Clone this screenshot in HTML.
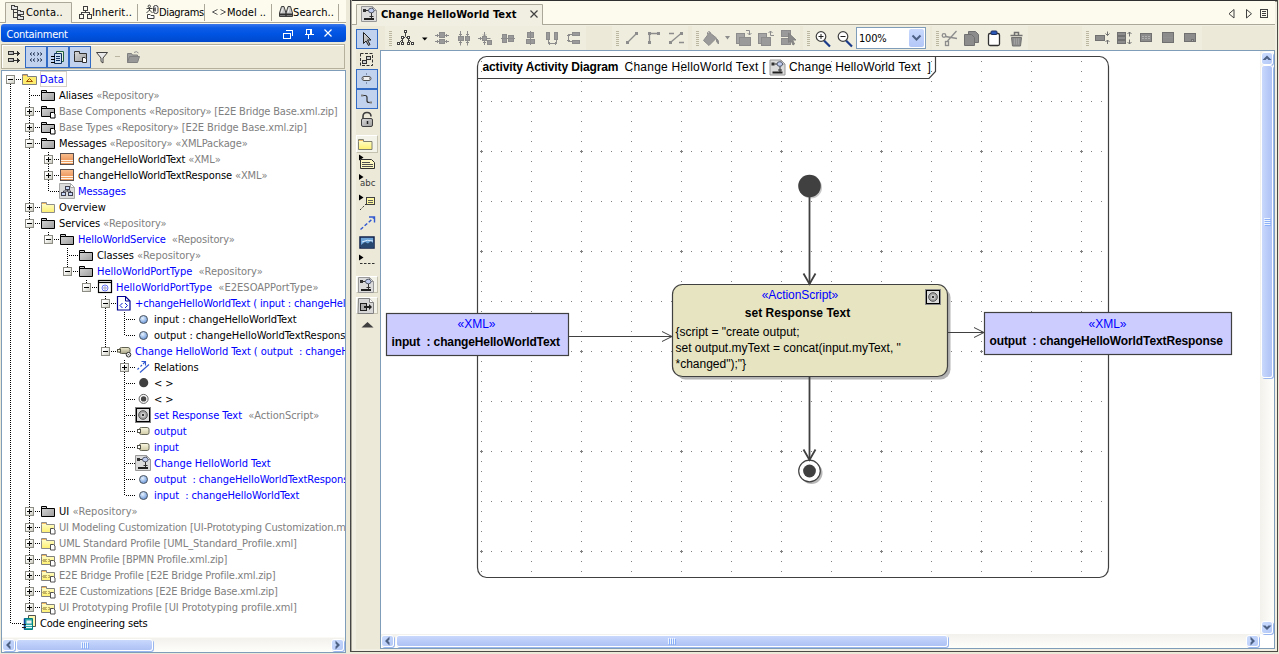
<!DOCTYPE html>
<html><head><meta charset="utf-8"><title>Change HelloWorld Text</title><style>
html,body{margin:0;padding:0}
body{width:1279px;height:654px;overflow:hidden;background:#ECE9D8;position:relative;font-family:"DejaVu Sans Condensed","Liberation Sans",sans-serif;font-size:11px;color:#000}
.a{position:absolute}
.t{position:absolute;white-space:pre;line-height:16px;height:16px;font-size:11px;letter-spacing:-0.22px;margin-top:1px}
.g{color:#808080}
.b{color:#0000FF}
svg{position:absolute;overflow:visible}
.dg{font-family:"Liberation Sans",Arial,sans-serif}
</style></head><body>
<svg class="a" width="0" height="0" style="left:0;top:0"><defs><linearGradient id="gg" x1="0" y1="0" x2="1" y2="1"><stop offset="0" stop-color="#DADADA"/><stop offset="1" stop-color="#9C9C9C"/></linearGradient><linearGradient id="og" x1="0" y1="0" x2="0" y2="1"><stop offset="0" stop-color="#F8C090"/><stop offset="1" stop-color="#E88040"/></linearGradient><linearGradient id="yg" x1="0" y1="0" x2="0" y2="1"><stop offset="0" stop-color="#F0ECD0"/><stop offset="1" stop-color="#A8A488"/></linearGradient><linearGradient id="eg" x1="0" y1="0" x2="1" y2="1"><stop offset="0.300" stop-color="#FFFFFF"/><stop offset="1" stop-color="#C8C8BC"/></linearGradient><linearGradient id="yg2" x1="0" y1="0" x2="0" y2="1"><stop offset="0" stop-color="#FAF8E0"/><stop offset="1" stop-color="#D0CCA8"/></linearGradient><linearGradient id="fg" x1="0" y1="0" x2="0" y2="1"><stop offset="0.200" stop-color="#FFFCC0"/><stop offset="1" stop-color="#FFF070"/></linearGradient><radialGradient id="bg" cx="0.4" cy="0.35" r="0.7"><stop offset="0" stop-color="#E8F4FF"/><stop offset="1" stop-color="#6090D8"/></radialGradient><symbol id="i-pkg" overflow="visible"><path d="M0.5 3.5h5v2h8v8h-13z" fill="url(#gg)" stroke="#000"/><path d="M0.5 5.5h5" stroke="#000"/></symbol><symbol id="i-pkgs" overflow="visible"><path d="M0.5 3.5h5v2h8v8h-13z" fill="url(#gg)" stroke="#000"/><path d="M0.5 5.5h5" stroke="#000"/><path d="M9.5 9.5h3l1.5 1.5v4h-4.5z" fill="#fff" stroke="#000"/></symbol><symbol id="i-fold" overflow="visible"><path d="M0.500 5.500v-2h5v2h8v8h-13z" fill="url(#fg)" stroke="#8C8C8C"/><path d="M1 4.500h4" stroke="#F4B860"/></symbol><symbol id="i-folds" overflow="visible"><path d="M0.500 5.500v-2h5v2h8v8h-13z" fill="url(#fg)" stroke="#8C8C8C"/><path d="M1 4.500h4" stroke="#F4B860"/><path d="M9.5 9.5h3l1.5 1.5v4h-4.5z" fill="#fff" stroke="#505050"/></symbol><symbol id="i-data" overflow="visible"><path d="M0.5 5.5v-2h5v2h9v8h-14z" fill="#FFEE70" stroke="#808080"/><path d="M1 4.5h4" stroke="#F0B050"/><path d="M4.5 10.5l3-3l3 3z" fill="none" stroke="#A05000"/></symbol><symbol id="i-cls" overflow="visible"><rect x="0.5" y="2.5" width="13" height="11" fill="url(#og)" stroke="#585050"/><path d="M1 9.500h12M1 11.500h12" stroke="#FFF4E8"/><path d="M1 10.500h12M1 12.500h12" stroke="#F0A060"/></symbol><symbol id="i-cdiag" overflow="visible"><path d="M-0.500 0.500h11l4 4v11h-15z" fill="#DCDCDC" stroke="#A8A8A8"/><path d="M10.500 0.500v4h4z" fill="#fff" stroke="#A8A8A8"/><g fill="#C8D8F8" stroke="#404050"><rect x="5.500" y="3.500" width="4" height="3"/><rect x="1.500" y="9.500" width="4" height="3"/><rect x="8.500" y="9.500" width="4" height="3"/></g><path d="M7.500 7v1.500M3.500 9.500v-1.500h7v1.500" fill="none" stroke="#404050"/></symbol><symbol id="i-port" overflow="visible"><rect x="0.500" y="1.500" width="13" height="12" fill="#fff" stroke="#000" stroke-width="1.200"/><path d="M0.500 3.500h13" stroke="#000" stroke-width="1.200"/><circle cx="7" cy="9" r="3" fill="none" stroke="#4050F0" stroke-width="0.800"/><path d="M5.500 9l1.500-1.500l1.500 1.500l-1.500 1.500z" fill="#F8E8A0" stroke="#4050F0" stroke-width="0.600"/></symbol><symbol id="i-oper" overflow="visible"><path d="M0.500 1.500h8l4.500 4.500v9h-12.500z" fill="#fff" stroke="#000090" stroke-width="1.200"/><path d="M8.500 2v4h4" fill="none" stroke="#000090" stroke-width="1"/><path d="M5.500 8l-2.500 2.500l2.500 2.500M8 8l2.500 2.500l-2.500 2.500" fill="none" stroke="#1020D0" stroke-width="1"/></symbol><symbol id="i-circ" overflow="visible"><circle cx="7.500" cy="8.500" r="4" fill="url(#bg)" stroke="#505860"/></symbol><symbol id="i-act" overflow="visible"><rect x="2.500" y="4.500" width="10.500" height="6" rx="2" fill="url(#yg)" stroke="#606050"/><rect x="0.500" y="6.500" width="3" height="2.500" fill="#F4F0D8" stroke="#505040"/><circle cx="11.500" cy="11.700" r="2.300" fill="#fff" stroke="#303030"/><path d="M10.500 10.700l2 2M12.500 10.700l-2 2" stroke="#505050" stroke-width="0.700"/></symbol><symbol id="i-rel" overflow="visible"><path d="M1.500 10.500l1.500-1.500M4.500 7.500l1.500-1.500M7 5l2.500-2.500" stroke="#3058D0" stroke-width="1.100"/><path d="M5.500 2.500h4v4" fill="none" stroke="#3058D0" stroke-width="1.100"/><path d="M4 13.500l9-8" stroke="#3058D0" stroke-width="1.100"/></symbol><symbol id="i-init" overflow="visible"><circle cx="7.700" cy="7.700" r="4.600" fill="#404040"/></symbol><symbol id="i-final" overflow="visible"><circle cx="7.600" cy="7.900" r="4.500" fill="#fff" stroke="#606060"/><circle cx="7.600" cy="7.900" r="2.700" fill="#484848"/></symbol><symbol id="i-action" overflow="visible"><rect x="-0.500" y="0.500" width="15" height="15" fill="#DCDCDC" stroke="#808080"/><rect x="0.500" y="1.500" width="13" height="13" fill="#DCDCDC" stroke="#000"/><circle cx="7" cy="8" r="4.300" fill="#A8A8A8" stroke="#505050"/><circle cx="7" cy="8" r="2.200" fill="#D0D0D0"/><circle cx="7" cy="8" r="1" fill="#000"/></symbol><symbol id="i-pin" overflow="visible"><rect x="3.500" y="4.500" width="9.500" height="7" rx="1.800" fill="url(#yg2)" stroke="#686858"/><rect x="1.500" y="6.500" width="3" height="3" fill="#fff" stroke="#505048"/></symbol><symbol id="i-adiag" overflow="visible"><path d="M0.500 0.500h11l4 4v11h-15z" fill="#DCDCDC" stroke="#989898"/><path d="M11.500 0.500v4h4z" fill="#fff" stroke="#989898"/><rect x="2" y="3" width="3" height="3" fill="#303030"/><path d="M5 4.500h3" stroke="#303030"/><ellipse cx="10.300" cy="4.500" rx="2.800" ry="2.300" fill="#C0CCF0" stroke="#505868"/><path d="M10.500 7v5.500M8.500 10.500h4" stroke="#303030"/><rect x="3" y="12" width="10" height="2" fill="#202020"/></symbol><symbol id="i-prof" overflow="visible"><path d="M0.500 5.500v-2h5v2h8v8h-13z" fill="url(#fg)" stroke="#808080"/><path d="M1 4.500h4" stroke="#F4B860"/><path d="M3.500 8l-1.500 1.500l1.500 1.500M5.500 8l-1.500 1.500l1.500 1.500M7.500 8l1.500 1.500l-1.500 1.500" fill="none" stroke="#705820" stroke-width="0.900"/><path d="M9.500 9.500h3l1.500 1.500v4h-4.500z" fill="#fff" stroke="#505050"/></symbol><symbol id="i-code" overflow="visible"><path d="M6.500 1.500h7v11h-7z" fill="#FFF8B0" stroke="#505050"/><path d="M2.500 4.500h8v11h-8z" fill="#30A8A8" stroke="#008080"/><path d="M2.500 4.500v11" stroke="#1040A0" stroke-width="1.500"/><path d="M4.500 6.500h5v3h-5z" fill="#F0F0F0"/><path d="M4 11.500h6M4 13.500h6" stroke="#E8F8F8"/><path d="M0 10.500h4M0 13.500h4" stroke="#202020"/></symbol></defs></svg>
<div class="a" style="left:0px;top:0px;width:346px;height:24px;background:#FDFBEE"></div>
<div class="a" style="left:0px;top:22px;width:346px;height:1px;background:#ACA899"></div>
<svg class="a" style="left:0;top:0" width="346" height="24"><path d="M5.500 22.500V2.500H71.500V22.500" fill="#F1EFE2" stroke="#ACA899"/><path d="M6 22.500H71" stroke="#F1EFE2"/><path d="M137.500 4v17M204.500 4v17M271.500 4v17M338.500 4v17" stroke="#ACA899"/><g fill="#E4E4E4" stroke="#404040" shape-rendering="crispEdges"><path d="M11.500 5.500h3v1h3v3h-6z"/><path d="M17.500 10.500h3v1h3v3h-6z"/><path d="M17.500 15.500h3v1h3v3h-6z"/><path d="M13.500 10v7.500h4M13.500 12.500h4" fill="none"/></g><g fill="#FDFBEE" stroke="#404040" shape-rendering="crispEdges"><rect x="83.500" y="6.500" width="4" height="4"/><rect x="79.500" y="14.500" width="4" height="4"/><rect x="87.500" y="14.500" width="4" height="4"/><path d="M85.500 10.500v2M81.500 14.500v-2h8v2" fill="none"/></g><g fill="none" stroke="#404040"><circle cx="149.300" cy="6.300" r="1.200"/><path d="M146.500 8.500h6M149.500 7.500v3M146.500 13l3-3l3 3"/><path d="M147.500 18.500v-4h2.500l1 1h3v3z" fill="#fff"/><rect x="153.500" y="5.500" width="4.500" height="8" rx="2" fill="#F4F4F4"/><path d="M155 7.500v4" stroke-width="1.500"/></g><g fill="none" stroke="#585858"><path d="M217.500 9.500l-5 2.500l5 2.500M220.500 9.500l5 2.500l-5 2.500"/></g><g fill="#C4C4C4" stroke="#404040"><path d="M281.500 6.500h2.500l2 6.500v3.500h-6.500v-3.500zM288 6.500h2.500l2 6.500v3.500h-6.500v-3.500z"/><path d="M279.500 14.500h6.500M286 14.500h6.500" stroke="#303030" stroke-width="2"/><path d="M282.500 8.500l-1 4M289 8.500l-1 4" stroke="#F4F4F4"/></g></svg>
<div class="t" id="tab0" style="left:26px;top:4px;letter-spacing:0.19px">Conta..</div>
<div class="t" id="tab1" style="left:92px;top:4px;letter-spacing:0.161px">Inherit..</div>
<div class="t" id="tab2" style="left:159px;top:4px;letter-spacing:-0.37px">Diagrams</div>
<div class="t" id="tab3" style="left:227px;top:4px;letter-spacing:-0.02px">Model ..</div>
<div class="t" id="tab4" style="left:293px;top:4px;letter-spacing:0.092px">Search..</div>
<div class="a" style="left:1px;top:24px;width:345px;height:18px;border-radius:3px;background:linear-gradient(#3B78EC 0%,#0D5CE6 22%,#0054E3 55%,#0048CC 100%)"></div>
<div class="t" style="left:6.500px;top:26px;color:#fff;letter-spacing:-0.27px">Containment</div>
<svg class="a" style="left:0;top:24px" width="346" height="18" fill="none" stroke="#fff" shape-rendering="crispEdges"><path d="M285.500 6.500h7v5" stroke-width="1"/><path d="M283.500 9h7v5h-7z M283 9.500h8" /><path d="M306.500 5.500h5v5h-5zM310.500 5.500v5M304.500 10.500h9M308.500 11v4"/><path d="M324.500 5.500l7 7M331.500 5.500l-7 7" shape-rendering="auto" stroke-width="1.200"/></svg>
<div class="a" style="left:1px;top:44px;width:344px;height:25px;box-sizing:border-box;border:1px solid #B4B09C;box-shadow:inset 1px 1px 0 #FFFFFF;background:#ECE9D8"></div>
<div class="a" style="left:25px;top:46px;width:22px;height:22px;box-sizing:border-box;border:1px solid #316AC5;background:#C1D2EE"></div>
<div class="a" style="left:47px;top:46px;width:22px;height:22px;box-sizing:border-box;border:1px solid #316AC5;background:#C1D2EE"></div>
<div class="a" style="left:69px;top:46px;width:22px;height:22px;box-sizing:border-box;border:1px solid #316AC5;background:#C1D2EE"></div>
<svg class="a" style="left:0;top:44px" width="346" height="25" fill="none"><g stroke="#303030" shape-rendering="crispEdges" fill="url(#gg)"><rect x="8.500" y="7.500" width="5" height="3"/><rect x="8.500" y="14.500" width="5" height="3"/><path d="M14 9h4M14 16h4" /><path d="M17 7v5l2.500-2.500zM17 14v5l2.500-2.500z" fill="#303030" stroke="none"/></g><g stroke="#283858" stroke-width="1"><path d="M32 8.500l-2 1.500l2 1.500M35 8.500l-2 1.500l2 1.500M37 8.500l2 1.500l-2 1.500M40 8.500l2 1.500l-2 1.500M32 14.500l-2 1.500l2 1.500M35 14.500l-2 1.500l2 1.500M37 14.500l2 1.500l-2 1.500M40 14.500l2 1.500l-2 1.500"/></g><g><path d="M56.500 7.500h7v10h-7z" fill="#E8F0E0" stroke="#206040"/><path d="M54.500 9.500h7v10h-7z" fill="#C8DCF4" stroke="#103060"/><path d="M56 12.500h4M56 14.500h4M56 16.500h4" stroke="#103060"/><path d="M51 12.500h4M51 15.500h4M51 18.500h4" stroke="#000"/></g><g><path d="M74.500 9.500v-2h5v2h7v8h-12z" fill="url(#gg)" stroke="#303030"/><path d="M82.500 13.500h2.500l1.500 1.500v3.500h-4z" fill="#fff" stroke="#303030"/></g><g><path d="M96.500 8.500h11l-4.500 5.500v5l-2-1.500v-3.500z" fill="#E8E8E8" stroke="#404040"/></g><path d="M115 12.500h5" stroke="#B8B4A0"/><g><path d="M127.500 18.500v-9h4l1 1.500h5v2" fill="#A0A0A0" stroke="#808080"/><path d="M127.500 18.500l2-6h10l-2 6z" fill="#989898" stroke="#808080"/><path d="M134 8.500q2.500-2 4.500 0.500" stroke="#909090"/></g></svg>
<div class="a" style="left:1px;top:70px;width:345px;height:583px;box-sizing:border-box;border:1px solid #7F9DB9;background:#fff"></div>
<div class="a" style="left:2px;top:71px;width:343px;height:566px;overflow:hidden"><div class="a" style="left:-2px;top:-71px;width:346px;height:654px">
<svg class="a" style="left:0;top:0" width="346" height="654" shape-rendering="crispEdges"><path d="M10.5 84V624" stroke="#000" stroke-dasharray="1 1"/><path d="M29.5 88V608" stroke="#000" stroke-dasharray="1 1"/><path d="M48.5 152V192" stroke="#000" stroke-dasharray="1 1"/><path d="M48.5 232V240" stroke="#000" stroke-dasharray="1 1"/><path d="M67.5 248V272" stroke="#000" stroke-dasharray="1 1"/><path d="M86.5 280V288" stroke="#000" stroke-dasharray="1 1"/><path d="M105.5 296V352" stroke="#000" stroke-dasharray="1 1"/><path d="M124.5 312V336" stroke="#000" stroke-dasharray="1 1"/><path d="M124.5 360V496" stroke="#000" stroke-dasharray="1 1"/><path d="M16 79.5H21" stroke="#000" stroke-dasharray="1 1"/><rect x="6.5" y="75.5" width="8" height="8" fill="url(#eg)" stroke="#8C8C84"/><path d="M8 79.5h5" stroke="#000"/><path d="M31 95.5H40" stroke="#000" stroke-dasharray="1 1"/><path d="M35 111.5H40" stroke="#000" stroke-dasharray="1 1"/><rect x="25.5" y="107.5" width="8" height="8" fill="url(#eg)" stroke="#8C8C84"/><path d="M27 111.5h5" stroke="#000"/><path d="M29.5 109v5" stroke="#000"/><path d="M35 127.5H40" stroke="#000" stroke-dasharray="1 1"/><rect x="25.5" y="123.5" width="8" height="8" fill="url(#eg)" stroke="#8C8C84"/><path d="M27 127.5h5" stroke="#000"/><path d="M29.5 125v5" stroke="#000"/><path d="M35 143.5H40" stroke="#000" stroke-dasharray="1 1"/><rect x="25.5" y="139.5" width="8" height="8" fill="url(#eg)" stroke="#8C8C84"/><path d="M27 143.5h5" stroke="#000"/><path d="M54 159.5H59" stroke="#000" stroke-dasharray="1 1"/><rect x="44.5" y="155.5" width="8" height="8" fill="url(#eg)" stroke="#8C8C84"/><path d="M46 159.5h5" stroke="#000"/><path d="M48.5 157v5" stroke="#000"/><path d="M54 175.5H59" stroke="#000" stroke-dasharray="1 1"/><rect x="44.5" y="171.5" width="8" height="8" fill="url(#eg)" stroke="#8C8C84"/><path d="M46 175.5h5" stroke="#000"/><path d="M48.5 173v5" stroke="#000"/><path d="M50 191.5H59" stroke="#000" stroke-dasharray="1 1"/><path d="M35 207.5H40" stroke="#000" stroke-dasharray="1 1"/><rect x="25.5" y="203.5" width="8" height="8" fill="url(#eg)" stroke="#8C8C84"/><path d="M27 207.5h5" stroke="#000"/><path d="M29.5 205v5" stroke="#000"/><path d="M35 223.5H40" stroke="#000" stroke-dasharray="1 1"/><rect x="25.5" y="219.5" width="8" height="8" fill="url(#eg)" stroke="#8C8C84"/><path d="M27 223.5h5" stroke="#000"/><path d="M54 239.5H59" stroke="#000" stroke-dasharray="1 1"/><rect x="44.5" y="235.5" width="8" height="8" fill="url(#eg)" stroke="#8C8C84"/><path d="M46 239.5h5" stroke="#000"/><path d="M69 255.5H78" stroke="#000" stroke-dasharray="1 1"/><path d="M73 271.5H78" stroke="#000" stroke-dasharray="1 1"/><rect x="63.5" y="267.5" width="8" height="8" fill="url(#eg)" stroke="#8C8C84"/><path d="M65 271.5h5" stroke="#000"/><path d="M92 287.5H97" stroke="#000" stroke-dasharray="1 1"/><rect x="82.5" y="283.5" width="8" height="8" fill="url(#eg)" stroke="#8C8C84"/><path d="M84 287.5h5" stroke="#000"/><path d="M111 303.5H116" stroke="#000" stroke-dasharray="1 1"/><rect x="101.5" y="299.5" width="8" height="8" fill="url(#eg)" stroke="#8C8C84"/><path d="M103 303.5h5" stroke="#000"/><path d="M126 319.5H135" stroke="#000" stroke-dasharray="1 1"/><path d="M126 335.5H135" stroke="#000" stroke-dasharray="1 1"/><path d="M111 351.5H116" stroke="#000" stroke-dasharray="1 1"/><rect x="101.5" y="347.5" width="8" height="8" fill="url(#eg)" stroke="#8C8C84"/><path d="M103 351.5h5" stroke="#000"/><path d="M130 367.5H135" stroke="#000" stroke-dasharray="1 1"/><rect x="120.5" y="363.5" width="8" height="8" fill="url(#eg)" stroke="#8C8C84"/><path d="M122 367.5h5" stroke="#000"/><path d="M124.5 365v5" stroke="#000"/><path d="M126 383.5H135" stroke="#000" stroke-dasharray="1 1"/><path d="M126 399.5H135" stroke="#000" stroke-dasharray="1 1"/><path d="M126 415.5H135" stroke="#000" stroke-dasharray="1 1"/><path d="M126 431.5H135" stroke="#000" stroke-dasharray="1 1"/><path d="M126 447.5H135" stroke="#000" stroke-dasharray="1 1"/><path d="M126 463.5H135" stroke="#000" stroke-dasharray="1 1"/><path d="M126 479.5H135" stroke="#000" stroke-dasharray="1 1"/><path d="M126 495.5H135" stroke="#000" stroke-dasharray="1 1"/><path d="M35 511.5H40" stroke="#000" stroke-dasharray="1 1"/><rect x="25.5" y="507.5" width="8" height="8" fill="url(#eg)" stroke="#8C8C84"/><path d="M27 511.5h5" stroke="#000"/><path d="M29.5 509v5" stroke="#000"/><path d="M35 527.5H40" stroke="#000" stroke-dasharray="1 1"/><rect x="25.5" y="523.5" width="8" height="8" fill="url(#eg)" stroke="#8C8C84"/><path d="M27 527.5h5" stroke="#000"/><path d="M29.5 525v5" stroke="#000"/><path d="M35 543.5H40" stroke="#000" stroke-dasharray="1 1"/><rect x="25.5" y="539.5" width="8" height="8" fill="url(#eg)" stroke="#8C8C84"/><path d="M27 543.5h5" stroke="#000"/><path d="M29.5 541v5" stroke="#000"/><path d="M35 559.5H40" stroke="#000" stroke-dasharray="1 1"/><rect x="25.5" y="555.5" width="8" height="8" fill="url(#eg)" stroke="#8C8C84"/><path d="M27 559.5h5" stroke="#000"/><path d="M29.5 557v5" stroke="#000"/><path d="M35 575.5H40" stroke="#000" stroke-dasharray="1 1"/><rect x="25.5" y="571.5" width="8" height="8" fill="url(#eg)" stroke="#8C8C84"/><path d="M27 575.5h5" stroke="#000"/><path d="M29.5 573v5" stroke="#000"/><path d="M35 591.5H40" stroke="#000" stroke-dasharray="1 1"/><rect x="25.5" y="587.5" width="8" height="8" fill="url(#eg)" stroke="#8C8C84"/><path d="M27 591.5h5" stroke="#000"/><path d="M29.5 589v5" stroke="#000"/><path d="M35 607.5H40" stroke="#000" stroke-dasharray="1 1"/><rect x="25.5" y="603.5" width="8" height="8" fill="url(#eg)" stroke="#8C8C84"/><path d="M27 607.5h5" stroke="#000"/><path d="M29.5 605v5" stroke="#000"/><path d="M12 623.5H21" stroke="#000" stroke-dasharray="1 1"/></svg>
<div class="a" style="left:40px;top:71px;width:27px;height:16px;box-sizing:border-box;border:1px solid #D4D0C8;background:#FFFEF8"></div>
<svg class="a" style="left:22px;top:71px" width="16" height="16"><use href="#i-data"/></svg>
<div class="t" id="r0" style="left:40px;top:71px;letter-spacing:0.04px"><span class="b">Data</span></div>
<svg class="a" style="left:41px;top:87px" width="16" height="16"><use href="#i-pkg"/></svg>
<div class="t" id="r1" style="left:59px;top:87px;letter-spacing:-0.094px">Aliases<span class="g"> «Repository»</span></div>
<svg class="a" style="left:41px;top:103px" width="16" height="16"><use href="#i-pkgs"/></svg>
<div class="t" id="r2" style="left:59px;top:103px;letter-spacing:-0.186px"><span class="g">Base Components «Repository» [E2E Bridge Base.xml.zip]</span></div>
<svg class="a" style="left:41px;top:119px" width="16" height="16"><use href="#i-pkgs"/></svg>
<div class="t" id="r3" style="left:59px;top:119px;letter-spacing:-0.122px"><span class="g">Base Types «Repository» [E2E Bridge Base.xml.zip]</span></div>
<svg class="a" style="left:41px;top:135px" width="16" height="16"><use href="#i-pkg"/></svg>
<div class="t" id="r4" style="left:59px;top:135px;letter-spacing:-0.135px">Messages<span class="g"> «Repository» «XMLPackage»</span></div>
<svg class="a" style="left:60px;top:151px" width="16" height="16"><use href="#i-cls"/></svg>
<div class="t" id="r5" style="left:78px;top:151px;letter-spacing:-0.119px">changeHelloWorldText<span class="g"> «XML»</span></div>
<svg class="a" style="left:60px;top:167px" width="16" height="16"><use href="#i-cls"/></svg>
<div class="t" id="r6" style="left:78px;top:167px;letter-spacing:-0.114px">changeHelloWorldTextResponse<span class="g"> «XML»</span></div>
<svg class="a" style="left:60px;top:183px" width="16" height="16"><use href="#i-cdiag"/></svg>
<div class="t" id="r7" style="left:78px;top:183px;letter-spacing:-0.106px"><span class="b">Messages</span></div>
<svg class="a" style="left:41px;top:199px" width="16" height="16"><use href="#i-fold"/></svg>
<div class="t" id="r8" style="left:59px;top:199px;letter-spacing:0.026px">Overview</div>
<svg class="a" style="left:41px;top:215px" width="16" height="16"><use href="#i-pkg"/></svg>
<div class="t" id="r9" style="left:59px;top:215px;letter-spacing:-0.089px">Services<span class="g"> «Repository»</span></div>
<svg class="a" style="left:60px;top:231px" width="16" height="16"><use href="#i-pkg"/></svg>
<div class="t" id="r10" style="left:78px;top:231px;letter-spacing:-0.13px"><span class="b">HelloWorldService</span><span class="g">  «Repository»</span></div>
<svg class="a" style="left:79px;top:247px" width="16" height="16"><use href="#i-pkg"/></svg>
<div class="t" id="r11" style="left:97px;top:247px;letter-spacing:-0.051px">Classes<span class="g"> «Repository»</span></div>
<svg class="a" style="left:79px;top:263px" width="16" height="16"><use href="#i-pkg"/></svg>
<div class="t" id="r12" style="left:97px;top:263px;letter-spacing:-0.015px"><span class="b">HelloWorldPortType</span><span class="g">  «Repository»</span></div>
<svg class="a" style="left:98px;top:279px" width="16" height="16"><use href="#i-port"/></svg>
<div class="t" id="r13" style="left:116px;top:279px;letter-spacing:0.028px"><span class="b">HelloWorldPortType</span><span class="g">  «E2ESOAPPortType»</span></div>
<svg class="a" style="left:117px;top:295px" width="16" height="16"><use href="#i-oper"/></svg>
<div class="t" id="r14" style="left:135px;top:295px;letter-spacing:-0.132px"><span class="b">+changeHelloWorldText ( input : changeHelloWorldText ) : changeHelloWorldTextResponse</span></div>
<svg class="a" style="left:136px;top:311px" width="16" height="16"><use href="#i-circ"/></svg>
<div class="t" id="r15" style="left:154px;top:311px;letter-spacing:-0.079px">input : changeHelloWorldText</div>
<svg class="a" style="left:136px;top:327px" width="16" height="16"><use href="#i-circ"/></svg>
<div class="t" id="r16" style="left:154px;top:327px;letter-spacing:-0.055px">output : changeHelloWorldTextResponse</div>
<svg class="a" style="left:117px;top:343px" width="16" height="16"><use href="#i-act"/></svg>
<div class="t" id="r17" style="left:135px;top:343px;letter-spacing:-0.074px"><span class="b">Change HelloWorld Text ( output  : changeHelloWorldTextResponse, input  : changeHelloWorldText )</span></div>
<svg class="a" style="left:136px;top:359px" width="16" height="16"><use href="#i-rel"/></svg>
<div class="t" id="r18" style="left:154px;top:359px;letter-spacing:-0.09px">Relations</div>
<svg class="a" style="left:136px;top:375px" width="16" height="16"><use href="#i-init"/></svg>
<div class="t" id="r19" style="left:154px;top:375px;letter-spacing:-0.078px">&lt; &gt;</div>
<svg class="a" style="left:136px;top:391px" width="16" height="16"><use href="#i-final"/></svg>
<div class="t" id="r20" style="left:154px;top:391px;letter-spacing:-0.078px">&lt; &gt;</div>
<svg class="a" style="left:136px;top:407px" width="16" height="16"><use href="#i-action"/></svg>
<div class="t" id="r21" style="left:154px;top:407px;letter-spacing:-0.042px"><span class="b">set Response Text</span><span class="g">  «ActionScript»</span></div>
<svg class="a" style="left:136px;top:423px" width="16" height="16"><use href="#i-pin"/></svg>
<div class="t" id="r22" style="left:154px;top:423px;letter-spacing:-0.023px"><span class="b">output</span></div>
<svg class="a" style="left:136px;top:439px" width="16" height="16"><use href="#i-pin"/></svg>
<div class="t" id="r23" style="left:154px;top:439px;letter-spacing:-0.154px"><span class="b">input</span></div>
<svg class="a" style="left:135px;top:455px" width="16" height="16"><use href="#i-adiag"/></svg>
<div class="t" id="r24" style="left:154px;top:455px;letter-spacing:-0.031px"><span class="b">Change HelloWorld Text</span></div>
<svg class="a" style="left:136px;top:471px" width="16" height="16"><use href="#i-circ"/></svg>
<div class="t" id="r25" style="left:154px;top:471px;letter-spacing:-0.057px"><span class="b">output  : changeHelloWorldTextResponse</span></div>
<svg class="a" style="left:136px;top:487px" width="16" height="16"><use href="#i-circ"/></svg>
<div class="t" id="r26" style="left:154px;top:487px;letter-spacing:-0.084px"><span class="b">input  : changeHelloWorldText</span></div>
<svg class="a" style="left:41px;top:503px" width="16" height="16"><use href="#i-pkg"/></svg>
<div class="t" id="r27" style="left:59px;top:503px;letter-spacing:0.047px">UI<span class="g"> «Repository»</span></div>
<svg class="a" style="left:41px;top:519px" width="16" height="16"><use href="#i-folds"/></svg>
<div class="t" id="r28" style="left:59px;top:519px;letter-spacing:-0.176px"><span class="g">UI Modeling Customization [UI-Prototyping Customization.mdzip]</span></div>
<svg class="a" style="left:41px;top:535px" width="16" height="16"><use href="#i-folds"/></svg>
<div class="t" id="r29" style="left:59px;top:535px;letter-spacing:-0.098px"><span class="g">UML Standard Profile [UML_Standard_Profile.xml]</span></div>
<svg class="a" style="left:41px;top:551px" width="16" height="16"><use href="#i-prof"/></svg>
<div class="t" id="r30" style="left:59px;top:551px;letter-spacing:-0.185px"><span class="g">BPMN Profile [BPMN Profile.xml.zip]</span></div>
<svg class="a" style="left:41px;top:567px" width="16" height="16"><use href="#i-prof"/></svg>
<div class="t" id="r31" style="left:59px;top:567px;letter-spacing:-0.197px"><span class="g">E2E Bridge Profile [E2E Bridge Profile.xml.zip]</span></div>
<svg class="a" style="left:41px;top:583px" width="16" height="16"><use href="#i-prof"/></svg>
<div class="t" id="r32" style="left:59px;top:583px;letter-spacing:-0.235px"><span class="g">E2E Customizations [E2E Bridge Base.xml.zip]</span></div>
<svg class="a" style="left:41px;top:599px" width="16" height="16"><use href="#i-prof"/></svg>
<div class="t" id="r33" style="left:59px;top:599px;letter-spacing:-0.06px"><span class="g">UI Prototyping Profile [UI Prototyping profile.xml]</span></div>
<svg class="a" style="left:22px;top:614px" width="16" height="16"><use href="#i-code"/></svg>
<div class="t" id="r34" style="left:40px;top:615px;letter-spacing:-0.173px">Code engineering sets</div>
</div></div>
<div class="a" style="left:2px;top:637px;width:343px;height:15px;background:#FBFAF5"></div>
<div class="a" style="left:2px;top:638px;width:342px;height:14px;background:linear-gradient(#F3F1EC,#FEFEFB)"></div>
<div class="a" style="left:2px;top:639px;width:13px;height:12px;box-sizing:border-box;border:1px solid #FFFFFF;border-radius:3px;background:linear-gradient(135deg,#CBDCFD,#B4C8F6);box-shadow:1px 1px 0 0 #9AB6EE"></div>
<svg class="a" style="left:2px;top:638px" width="13" height="14"><path d="M4 7L8.500 2.500V5.500L7 7L8.500 8.500V11.500Z" fill="#4D6185"/></svg>
<div class="a" style="left:331px;top:639px;width:13px;height:12px;box-sizing:border-box;border:1px solid #FFFFFF;border-radius:3px;background:linear-gradient(135deg,#CBDCFD,#B4C8F6);box-shadow:1px 1px 0 0 #9AB6EE"></div>
<svg class="a" style="left:331px;top:638px" width="13" height="14"><path d="M9 7L4.500 2.500V5.500L6 7L4.500 8.500V11.500Z" fill="#4D6185"/></svg>
<div class="a" style="left:16px;top:639px;width:137px;height:12px;box-sizing:border-box;border:1px solid #FFFFFF;border-radius:3px;background:linear-gradient(#C9D8FC,#BACCF8 50%,#AEC2F4);box-shadow:1px 1px 0 0 #9AB6EE"></div>
<svg class="a" style="left:80.5px;top:638px" width="8" height="14" shape-rendering="crispEdges"><path d="M0.500 4v6M2.500 4v6M4.500 4v6M6.500 4v6" stroke="#EEF4FE"/><path d="M1.500 5v6M3.500 5v6M5.500 5v6M7.500 5v6" stroke="#8CB0F8"/></svg>
<div class="a" style="left:350px;top:0px;width:929px;height:653px;background:#ECE9D8"></div>
<div class="a" style="left:350px;top:0px;width:928px;height:2px;background:linear-gradient(#303030 50%,#9A988C 50%)"></div>
<div class="a" style="left:350px;top:0px;width:1px;height:652px;background:#454545"></div>
<div class="a" style="left:351px;top:0px;width:1px;height:652px;background:#A8A69A"></div>
<div class="a" style="left:1277px;top:0px;width:1px;height:652px;background:#4C4A44"></div>
<div class="a" style="left:350px;top:651px;width:928px;height:1px;background:#4C4A44"></div>
<div class="a" style="left:1275px;top:2px;width:2px;height:649px;background:#F1EFE2"></div>
<div class="a" style="left:352px;top:649px;width:925px;height:2px;background:#F1EFE2"></div>
<div class="a" style="left:352px;top:1px;width:923px;height:23px;background:#FDFBEE"></div>
<div class="a" style="left:352px;top:24px;width:923px;height:1px;background:#ACA899"></div>
<div class="a" style="left:352px;top:25px;width:923px;height:25px;background:#ECE9D8"></div>
<div class="a" style="left:352px;top:25px;width:29px;height:624px;background:#ECE9D8"></div>
<div class="a" style="left:352px;top:25px;width:4px;height:624px;background:#F1EFE2"></div>
<div class="a" style="left:352px;top:25px;width:923px;height:1px;background:#F1EFE2"></div>
<svg class="a" style="left:350px;top:0" width="929" height="26"><path d="M2 24.500H6.500V4.500H192.500V24.500" fill="#F1EFE2" stroke="#ACA899"/><path d="M7 24.500H192" stroke="#F1EFE2"/><path d="M180.500 10.500l7 7M187.500 10.500l-7 7" stroke="#404040" stroke-width="1.200"/><path d="M884 9.500v8.500l-5-4.250z" fill="none" stroke="#404040"/><path d="M896.500 9.500v8.500l5-4.250z" fill="none" stroke="#404040"/><g shape-rendering="crispEdges" stroke="#404040" fill="none"><rect x="910.500" y="9.500" width="7" height="8"/><path d="M912 11.500h4M912 13.500h4M912 15.500h4"/></g></svg>
<svg class="a" style="left:361px;top:6px" width="16" height="16"><use href="#i-adiag"/></svg>
<div class="t" style="left:381px;top:6px;font-weight:bold;letter-spacing:0.109px" id="tabtitle">Change HelloWorld Text</div>
<div class="a" style="left:385px;top:26px;width:201px;height:24px;background:#EFEDDE"></div>
<svg class="a" style="left:389px;top:31px" width="4" height="16" shape-rendering="crispEdges"><path d="M0 0.500h3M0 2.500h3M0 4.500h3M0 6.500h3M0 8.500h3M0 10.500h3M0 12.500h3M0 14.500h3" stroke="#BAB6A0"/></svg>
<div class="a" style="left:612px;top:26px;width:76px;height:24px;background:#EFEDDE"></div>
<svg class="a" style="left:616px;top:31px" width="4" height="16" shape-rendering="crispEdges"><path d="M0 0.500h3M0 2.500h3M0 4.500h3M0 6.500h3M0 8.500h3M0 10.500h3M0 12.500h3M0 14.500h3" stroke="#BAB6A0"/></svg>
<div class="a" style="left:692px;top:26px;width:108px;height:24px;background:#EFEDDE"></div>
<svg class="a" style="left:696px;top:31px" width="4" height="16" shape-rendering="crispEdges"><path d="M0 0.500h3M0 2.500h3M0 4.500h3M0 6.500h3M0 8.500h3M0 10.500h3M0 12.500h3M0 14.500h3" stroke="#BAB6A0"/></svg>
<div class="a" style="left:803px;top:26px;width:127px;height:24px;background:#EFEDDE"></div>
<svg class="a" style="left:807px;top:31px" width="4" height="16" shape-rendering="crispEdges"><path d="M0 0.500h3M0 2.500h3M0 4.500h3M0 6.500h3M0 8.500h3M0 10.500h3M0 12.500h3M0 14.500h3" stroke="#BAB6A0"/></svg>
<div class="a" style="left:932px;top:26px;width:96px;height:24px;background:#EFEDDE"></div>
<svg class="a" style="left:936px;top:31px" width="4" height="16" shape-rendering="crispEdges"><path d="M0 0.500h3M0 2.500h3M0 4.500h3M0 6.500h3M0 8.500h3M0 10.500h3M0 12.500h3M0 14.500h3" stroke="#BAB6A0"/></svg>
<div class="a" style="left:1082px;top:26px;width:120px;height:24px;background:#EFEDDE"></div>
<svg class="a" style="left:1086px;top:31px" width="4" height="16" shape-rendering="crispEdges"><path d="M0 0.500h3M0 2.500h3M0 4.500h3M0 6.500h3M0 8.500h3M0 10.500h3M0 12.500h3M0 14.500h3" stroke="#BAB6A0"/></svg>
<svg class="a" style="left:0;top:0" width="1279" height="52"><g fill="#fff" stroke="#404040" shape-rendering="crispEdges"><path d="M405.500 33v3M405.500 36.500l-6 6M405.500 36.500l6 6M402.500 39.500v3M408.500 39.500v3" fill="none" shape-rendering="auto"/><rect x="404.500" y="30.500" width="2" height="2"/><rect x="401.500" y="36.500" width="2" height="2"/><rect x="407.500" y="36.500" width="2" height="2"/><rect x="397.500" y="42.500" width="2" height="2"/><rect x="401.500" y="42.500" width="2" height="2"/><rect x="407.500" y="42.500" width="2" height="2"/><rect x="411.500" y="42.500" width="2" height="2"/></g><path d="M422 37.500h5.500l-2.750 3z" fill="#000"/><g fill="#9A9A9A" stroke="#8C8C8C"><rect x="439.500" y="32.500" width="5" height="5"/><rect x="439.500" y="39.500" width="5" height="4"/><path d="M435 35.500h4M445 35.500h4M435 41.500h4M445 41.500h4M437 34l1.500 1.500l-1.500 1.500M447 34l-1.500 1.500l1.500 1.500M437 40l1.500 1.500l-1.500 1.500M447 40l-1.500 1.500l1.500 1.500" fill="none"/></g><g fill="#9A9A9A" stroke="#8C8C8C"><rect x="458.500" y="36.500" width="5" height="4"/><rect x="465.500" y="36.500" width="4" height="4"/><path d="M460.500 31v5M460.500 41v4.500M467.500 31v5M467.500 41v4.500M459 34l1.500 1.500l1.500-1.500M466 34l1.500 1.500l1.500-1.500M459 43l1.500-1.500l1.500 1.500M466 43l1.500-1.500l1.500 1.500" fill="none"/></g><g fill="#9A9A9A" stroke="#8C8C8C"><rect x="482.500" y="36.500" width="4" height="4"/><rect x="487.500" y="40.500" width="4" height="4"/><path d="M478 38.500h4M484.500 32v4M484.500 41v4M487 38.500h3.500M480 37l1.500 1.500l-1.500 1.500M483 34.500l1.500 1.500l1.500-1.500M483 43l1.500-1.500l1.500 1.500" fill="none"/></g><g fill="#9A9A9A" stroke="#8C8C8C"><rect x="502.500" y="34.500" width="4" height="8"/><rect x="508.500" y="35.500" width="5" height="6"/><path d="M501 38.500h14" fill="none"/></g><g fill="#9A9A9A" stroke="#8C8C8C"><rect x="527.500" y="32.500" width="6" height="5"/><rect x="526.500" y="39.500" width="8" height="4"/><path d="M530.500 31v14" fill="none"/></g><g fill="#9A9A9A" stroke="#8C8C8C"><rect x="546.500" y="32.500" width="3" height="7"/><rect x="554.500" y="32.500" width="3" height="7"/><path d="M548.500 40v3.500h8v-3.500M550 42l-1.500 1.500l1.500 1.500M555 42l1.500 1.500l-1.500 1.500" fill="none"/></g><g fill="#9A9A9A" stroke="#8C8C8C"><rect x="572.500" y="32.500" width="7" height="3"/><rect x="572.500" y="40.500" width="7" height="3"/><path d="M572 34.500h-3.500v7h3.500M567 36l1.500-1.500l1.500 1.500M567 40l1.500 1.500l1.500-1.500" fill="none"/></g><g fill="#8C8C8C" stroke="#8C8C8C"><path d="M628 42l8-8" stroke-width="1.300"/><rect x="626" y="41" width="3" height="3" stroke="none"/><rect x="635" y="32" width="3" height="3" stroke="none"/><path d="M649.500 42v-8.500h9" fill="none" stroke-width="1.300"/><rect x="648" y="41" width="3" height="3" stroke="none"/><rect x="648" y="32" width="3" height="3" stroke="none"/><rect x="657" y="32" width="3" height="3" stroke="none"/><path d="M671 42l10-8.500" stroke-width="1.300"/><rect x="669" y="41" width="3" height="3" stroke="none"/><rect x="680" y="32" width="3" height="3" stroke="none"/><path d="M669 33.500h5M679 42.500h5" stroke-width="1.500"/></g><g fill="#9A9A9A" stroke="#8C8C8C"><path d="M703.500 40.500l6-8l7 5.500l-7.500 7.500z"/><path d="M707.500 34.500v-2q1.500-2 3 0v1" fill="none"/><path d="M716.500 38.500q2.500 1.500 2 5.500l-2-2.500z" fill="#8C8C8C"/></g><path d="M725 36h5l-2.500 3.500z" fill="#8C8C8C"/><g fill="#A4A4A4" stroke="#8C8C8C"><rect x="736.500" y="33.500" width="8" height="10"/><rect x="739.500" y="37.500" width="11" height="8" fill="#9A9A9A"/><path d="M746 30.500h3.500v4.500M747.500 33l2 2l2-2" fill="none"/></g><g fill="#A4A4A4" stroke="#8C8C8C"><rect x="758.500" y="33.500" width="8" height="10"/><rect x="761.500" y="37.500" width="9" height="8" fill="#9A9A9A"/><path d="M770.500 31v4.500h3.500M768.500 33l2-2l2 2" fill="none"/></g><g fill="#9A9A9A" stroke="#8C8C8C"><rect x="781.500" y="30.500" width="9" height="6"/><rect x="781.500" y="38.500" width="9" height="6"/><path d="M788.500 33v9.500l2.500-2l2 4.500l1.500-1l-2-4h3.500z" fill="#8A8A8A" stroke="#808080"/></g><path d="M824 40.500l6 6" stroke="#1A3A8A" stroke-width="2.200"/><circle cx="821" cy="36.500" r="4.800" fill="#fff" stroke="#404040" stroke-width="1.200"/><path d="M818.5 36.500h5" stroke="#202020"/><path d="M821 34v5" stroke="#202020"/><path d="M846 40.500l6 6" stroke="#1A3A8A" stroke-width="2.200"/><circle cx="843" cy="36.500" r="4.800" fill="#fff" stroke="#404040" stroke-width="1.200"/><path d="M840.5 36.500h5" stroke="#202020"/><g fill="none" stroke="#8C8C8C" stroke-width="1.300"><path d="M945.500 36.500L957 38.500M947.500 41L956.500 31"/><rect x="945.500" y="41.500" width="3" height="4"/><circle cx="944" cy="35.500" r="1.800"/></g><g fill="#8C8C8C" stroke="#707070"><path d="M968.500 31.500h7l3 3v8h-10z"/><path d="M964.500 34.500h7l3 3v8h-10z" fill="#8C8C8C"/></g><g><rect x="988.500" y="33.500" width="11" height="12" rx="1.500" fill="#fff" stroke="#303030" stroke-width="1.300"/><rect x="991" y="31" width="6" height="3.500" rx="1" fill="#2A58B8" stroke="#203060"/></g><g fill="#8C8C8C" stroke="#707070"><path d="M1010.500 35.500h12M1014.500 35v-2.500h4v2.500" fill="none" stroke-width="1.500"/><path d="M1011.500 37.500h10l-1 8.500h-8z"/><path d="M1014.500 38.500v6M1016.500 38.500v6M1018.500 38.500v6" stroke="#A0A0A0"/></g><g fill="#8C8C8C" stroke="#707070"><rect x="1095.500" y="35.500" width="9" height="5"/><path d="M1107.500 31.500v4M1107.500 40v4M1105.500 33.500l2 2l2-2M1105.500 42l2-2l2 2" fill="none"/></g><g fill="#8C8C8C" stroke="#707070"><rect x="1117.500" y="32.500" width="8" height="3"/><rect x="1117.500" y="36.500" width="8" height="3"/><rect x="1117.500" y="40.500" width="8" height="3"/><path d="M1129.500 32v4.500M1129.500 39.500v4.500M1127.500 34l2-2l2 2M1127.500 42l2 2l2-2" fill="none"/></g><g fill="#8C8C8C" stroke="#707070"><rect x="1140.500" y="33.500" width="11" height="8"/><path d="M1142 36.500h8M1142 38.500h8" stroke="#B0B0B0" stroke-dasharray="2 1"/></g><g fill="#8C8C8C" stroke="#707070"><rect x="1162.500" y="32.500" width="11" height="10"/><path d="M1163 37.500h10" stroke="#909090"/></g><g fill="#8C8C8C" stroke="#707070"><rect x="1184.500" y="33.500" width="11" height="8"/><rect x="1191.500" y="39.500" width="2" height="2" fill="#B0B0B0"/></g></svg>
<div class="a" style="left:856px;top:27px;width:70px;height:22px;box-sizing:border-box;border:1px solid #7F9DB9;background:#fff"></div>
<div class="t" style="left:859px;top:30px;letter-spacing:-0.2px">100%</div>
<div class="a" style="left:909px;top:29px;width:15px;height:18px;border-radius:2px;background:linear-gradient(#C9D9FD,#B3C7F7)"></div>
<svg class="a" style="left:909px;top:29px" width="15" height="18"><path d="M3.500 6.500l4 4l4-4" fill="none" stroke="#4D6185" stroke-width="2"/></svg>
<div class="a" style="left:356px;top:29px;width:22px;height:20px;box-sizing:border-box;border:1px solid #316AC5;background:#C1D2EE"></div>
<div class="a" style="left:356px;top:69px;width:22px;height:20px;box-sizing:border-box;border:1px solid #316AC5;background:#C1D2EE"></div>
<div class="a" style="left:356px;top:89px;width:22px;height:20px;box-sizing:border-box;border:1px solid #316AC5;background:#C1D2EE"></div>
<div class="a" style="left:356px;top:135px;width:22px;height:18px;box-sizing:border-box;border:1px solid;border-color:#fff #C5C2B0 #C5C2B0 #fff;background:#F4F3EA"></div>
<div class="a" style="left:356px;top:276px;width:22px;height:17px;box-sizing:border-box;border:1px solid;border-color:#fff #C5C2B0 #C5C2B0 #fff;background:#F4F3EA"></div>
<div class="a" style="left:356px;top:297px;width:22px;height:17px;box-sizing:border-box;border:1px solid;border-color:#fff #C5C2B0 #C5C2B0 #fff;background:#F4F3EA"></div>
<svg class="a" style="left:0;top:0" width="400" height="340"><path d="M363.500 32.500v11l2.500-2.500l2.500 4.500l1.500-1l-2.500-4.500h3.500z" fill="url(#gg)" stroke="#202020"/><g fill="none" stroke="#303030"><rect x="360.500" y="53.500" width="12" height="12" stroke-dasharray="3 1.500"/><rect x="366.500" y="56.500" width="4" height="3" fill="#D0D0D0"/><rect x="362.500" y="60.500" width="4" height="3" fill="#D0D0D0"/><path d="M366.500 60.500v-2.500"/></g><g fill="none" stroke="#505050"><rect x="362" y="76.500" width="9" height="4" rx="2" fill="#F0F0F0"/><path d="M364 78.500h-1.500M369 78.500h1.500" stroke="#909090" stroke-width="2"/><path d="M366.500 73v2M366.500 82v2" stroke="#8090B0"/></g><path d="M362 95.500h3q2 0 2 2v3q0 2 2 2h2" fill="none" stroke="#303030" stroke-width="1.200"/><path d="M361 95.500h2.500M369.500 102.500h2.500" stroke="#808080" stroke-width="2"/><g fill="none" stroke="#404040"><path d="M363 119v-2.500q0-4 4-4q4 0 4 4" stroke-width="1.600"/><rect x="361.500" y="118.500" width="11" height="8" rx="1.500" fill="url(#gg)"/><path d="M367.500 121v3" stroke-width="1.500" stroke="#202020"/></g><path d="M358.500 141.500v-2h5v2h8.500v8h-13.500z" fill="url(#fg)" stroke="#808070"/><path d="M359 140.500h4" stroke="#F0B860"/><path d="M359 154.500v6l4.500-3z" fill="#000"/><path d="M360.500 159.500h11l3 3v6h-14z" fill="#FFF8C0" stroke="#303030"/><path d="M362 162.500h8M362 164.500h11M362 166.500h11" stroke="#505050"/><path d="M359 174v6l4.500-3z" fill="#000"/><path d="M359 194.500v6l4.500-3z" fill="#000"/><rect x="366.500" y="197.500" width="8" height="7" fill="#FFF8A0" stroke="#404040"/><path d="M368 200.500h5M368 202.500h5" stroke="#606060"/><path d="M360 210l6-6" stroke="#303030" stroke-dasharray="2 1.500"/><path d="M360.500 229.500l13.500-12" stroke="#3058D0" stroke-width="1.400" stroke-dasharray="3.500 2"/><path d="M369 217h5.500v5.500" fill="none" stroke="#3058D0" stroke-width="1.400"/><rect x="360" y="237" width="14" height="11" fill="#6CA4D8" stroke="#102048" stroke-width="1.500"/><path d="M361 245l4-3l3 1.500l3-2.500l3 3v3.500h-13z" fill="#284870"/><path d="M362 242q5-3 11-1" stroke="#D8ECFF" fill="none"/><path d="M359 254.500v6l4.500-3z" fill="#000"/><path d="M360 263.500h15" stroke="#303030" stroke-dasharray="2.500 1.500"/><path d="M361.500 327.500l6-5.500l6 5.500z" fill="#404040"/></svg>
<div class="t" style="left:360px;top:174px;letter-spacing:0;font-size:9.5px;color:#383838">abc</div>
<svg class="a" style="left:358px;top:277px" width="16" height="16"><use href="#i-adiag"/></svg>
<svg class="a" style="left:358px;top:298px" width="16" height="16"><path d="M0.500 0.500h11l4 4v11h-15.500z" fill="#D8D8D8" stroke="#808080"/><path d="M11.500 0.500v4h4" fill="#fff" stroke="#808080"/><rect x="2.500" y="5.500" width="6" height="7" fill="#B0B0B0" stroke="#202020"/><path d="M6 9h6" stroke="#202020" stroke-width="2"/><path d="M11 6l3 3l-3 3z" fill="#202020"/></svg>
<div class="a" style="left:380px;top:50px;width:895px;height:599px;box-sizing:border-box;border:1px solid #7F9DB9;background:#fff"></div>
<div class="a" style="left:1260px;top:51px;width:14px;height:583px;background:linear-gradient(90deg,#F3F1EC,#FEFEFB)"></div>
<div class="a" style="left:1261px;top:52px;width:12px;height:13px;box-sizing:border-box;border:1px solid #FFFFFF;border-radius:3px;background:linear-gradient(135deg,#CBDCFD,#B4C8F6);box-shadow:1px 1px 0 0 #9AB6EE"></div>
<svg class="a" style="left:1260px;top:51px" width="14" height="14"><path d="M7 4.500L2.500 9H5.500L7 7.500L8.500 9H11.500Z" fill="#4D6185"/></svg>
<div class="a" style="left:1261px;top:621px;width:12px;height:13px;box-sizing:border-box;border:1px solid #FFFFFF;border-radius:3px;background:linear-gradient(135deg,#CBDCFD,#B4C8F6);box-shadow:1px 1px 0 0 #9AB6EE"></div>
<svg class="a" style="left:1260px;top:620px" width="14" height="14"><path d="M7 10L2.500 5.500H5.500L7 7L8.500 5.500H11.500Z" fill="#4D6185"/></svg>
<div class="a" style="left:1261px;top:65px;width:12px;height:313px;box-sizing:border-box;border:1px solid #FFFFFF;border-radius:3px;background:linear-gradient(90deg,#C9D8FC,#BACCF8 50%,#AEC2F4);box-shadow:1px 1px 0 0 #9AB6EE"></div>
<svg class="a" style="left:1260px;top:217.5px" width="14" height="8" shape-rendering="crispEdges"><path d="M4 0.500h6M4 2.500h6M4 4.500h6M4 6.500h6" stroke="#EEF4FE"/><path d="M5 1.500h6M5 3.500h6M5 5.500h6M5 7.500h6" stroke="#8CB0F8"/></svg>
<div class="a" style="left:381px;top:634px;width:879px;height:14px;background:linear-gradient(#F3F1EC,#FEFEFB)"></div>
<div class="a" style="left:381px;top:634px;width:878px;height:14px;background:linear-gradient(#F3F1EC,#FEFEFB)"></div>
<div class="a" style="left:381px;top:635px;width:13px;height:12px;box-sizing:border-box;border:1px solid #FFFFFF;border-radius:3px;background:linear-gradient(135deg,#CBDCFD,#B4C8F6);box-shadow:1px 1px 0 0 #9AB6EE"></div>
<svg class="a" style="left:381px;top:634px" width="13" height="14"><path d="M4 7L8.500 2.500V5.500L7 7L8.500 8.500V11.500Z" fill="#4D6185"/></svg>
<div class="a" style="left:1246px;top:635px;width:13px;height:12px;box-sizing:border-box;border:1px solid #FFFFFF;border-radius:3px;background:linear-gradient(135deg,#CBDCFD,#B4C8F6);box-shadow:1px 1px 0 0 #9AB6EE"></div>
<svg class="a" style="left:1246px;top:634px" width="13" height="14"><path d="M9 7L4.500 2.500V5.500L6 7L4.500 8.500V11.500Z" fill="#4D6185"/></svg>
<div class="a" style="left:396px;top:635px;width:552px;height:12px;box-sizing:border-box;border:1px solid #FFFFFF;border-radius:3px;background:linear-gradient(#C9D8FC,#BACCF8 50%,#AEC2F4);box-shadow:1px 1px 0 0 #9AB6EE"></div>
<svg class="a" style="left:668px;top:634px" width="8" height="14" shape-rendering="crispEdges"><path d="M0.500 4v6M2.500 4v6M4.500 4v6M6.500 4v6" stroke="#EEF4FE"/><path d="M1.500 5v6M3.500 5v6M5.500 5v6M7.500 5v6" stroke="#8CB0F8"/></svg>
<svg class="a dg" style="left:381px;top:51px" width="879" height="583" viewBox="381 51 879 583" font-family='"Liberation Sans",Arial,sans-serif' font-size="12"><defs><pattern id="gv" x="481" y="61" width="50" height="10" patternUnits="userSpaceOnUse"><rect x="0" y="0" width="1" height="1" fill="#808080"/></pattern><pattern id="gh" x="481" y="101" width="10" height="50" patternUnits="userSpaceOnUse"><rect x="0" y="0" width="1" height="1" fill="#808080"/></pattern><pattern id="gp" x="431" y="101" width="100" height="100" patternUnits="userSpaceOnUse"><path d="M49 50.500h3M50.500 49v3" stroke="#808080" shape-rendering="crispEdges"/></pattern></defs><rect x="481" y="61" width="621" height="511" fill="url(#gv)"/><rect x="481" y="61" width="621" height="511" fill="url(#gh)"/><rect x="479" y="100" width="623" height="472" fill="url(#gp)"/><rect x="477.500" y="56.500" width="631" height="521" rx="9" ry="10" fill="none" stroke="#404040" stroke-width="1.200"/><path d="M477.500 78.500H929L935.500 71.500V56.500" fill="none" stroke="#404040" stroke-width="1.200"/><text x="482.500" y="71" font-weight="bold" textLength="136" lengthAdjust="spacing" id="hd1">activity Activity Diagram</text><text x="624.500" y="71" textLength="141" lengthAdjust="spacing" id="hd2" xml:space="preserve">Change HelloWorld Text [</text><text x="789" y="71" textLength="131.500" lengthAdjust="spacing" id="hd3">Change HelloWorld Text</text><text x="927.500" y="71">]</text><g transform="translate(769.500,59.500)"><path d="M0.500 0.500h11l4 4v11h-15z" fill="#DCDCDC" stroke="#989898"/><path d="M11.500 0.500v4h4z" fill="#fff" stroke="#989898"/><rect x="2" y="3" width="3" height="3" fill="#303030"/><path d="M5 4.500h3" stroke="#303030"/><ellipse cx="10.300" cy="4.500" rx="2.800" ry="2.300" fill="#C0CCF0" stroke="#505868"/><path d="M10.500 7v5.500M8.500 10.500h4" stroke="#303030"/><rect x="3" y="12" width="10" height="2" fill="#202020"/></g><circle cx="811" cy="187.500" r="11" fill="#C8C8C8"/><circle cx="809.500" cy="186" r="11.300" fill="#404040"/><circle cx="811.500" cy="473" r="11" fill="#B8B8B8"/><circle cx="809.500" cy="471" r="10.800" fill="#fff" stroke="#404040" stroke-width="1.200"/><circle cx="809.500" cy="471" r="6.400" fill="#404040"/><rect x="675.500" y="287.500" width="275" height="92" rx="10" fill="#B4B4B4"/><rect x="672.500" y="284.500" width="275" height="92" rx="10" fill="#E6E4C1" stroke="#404040" stroke-width="1.200"/><text x="800" y="299" text-anchor="middle" fill="#0000FF" textLength="76.500" lengthAdjust="spacing">«ActionScript»</text><text x="797.500" y="317" text-anchor="middle" font-weight="bold" textLength="105.500" lengthAdjust="spacing">set Response Text</text><text x="675.500" y="336" xml:space="preserve">{script = "create output;</text><text x="675.500" y="352" xml:space="preserve">set output.myText = concat(input.myText, "</text><text x="675.500" y="368" xml:space="preserve">*changed");"}</text><g transform="translate(925,289)"><rect x="0.500" y="0.500" width="15" height="15" fill="#DCDCDC" stroke="#8C8C8C"/><rect x="1.500" y="1.500" width="13" height="13" fill="none" stroke="#000"/><circle cx="8" cy="8" r="4.300" fill="#A8A8A8" stroke="#505050"/><circle cx="8" cy="8" r="2.200" fill="#D0D0D0"/><circle cx="8" cy="8" r="1" fill="#000"/></g><rect x="386.500" y="313.500" width="182" height="42" fill="#CCCCFF" stroke="#404040" stroke-width="1.200"/><text x="476.500" y="328" text-anchor="middle" fill="#0000FF">«XML»</text><text x="391.500" y="345.500" font-weight="bold" textLength="168.500" lengthAdjust="spacing" xml:space="preserve">input  : changeHelloWorldText</text><rect x="984.500" y="312.500" width="247" height="42" fill="#CCCCFF" stroke="#404040" stroke-width="1.200"/><text x="1107.500" y="328" text-anchor="middle" fill="#0000FF">«XML»</text><text x="989.500" y="345" font-weight="bold" textLength="233.500" lengthAdjust="spacing" xml:space="preserve">output  : changeHelloWorldTextResponse</text><path d="M809.5 197V284" stroke="#404040" stroke-width="1.8"/><path d="M803.5 273.5L809.5 284L815.5 273.5" fill="none" stroke="#404040" stroke-width="1.8"/><path d="M809.5 377V460" stroke="#404040" stroke-width="1.8"/><path d="M803.5 449.5L809.5 460L815.5 449.5" fill="none" stroke="#404040" stroke-width="1.8"/><path d="M568.5 336.5H672" stroke="#404040" stroke-width="1"/><path d="M662 331.5L672 336.5L662 341.5" fill="none" stroke="#404040" stroke-width="1"/><path d="M947.5 332.5H984" stroke="#404040" stroke-width="1"/><path d="M974 327.5L984 332.5L974 337.5" fill="none" stroke="#404040" stroke-width="1"/></svg>
</body></html>
